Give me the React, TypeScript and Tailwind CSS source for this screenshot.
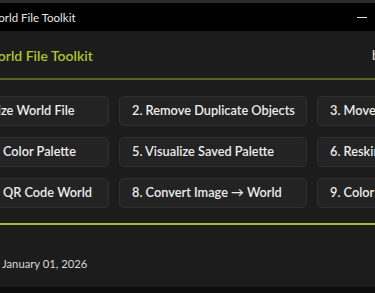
const tools = [
  "1. Standardize World File",
  "2. Remove Duplicate Objects",
  "3. Move Objects",
  "4. Generate Color Palette",
  "5. Visualize Saved Palette",
  "6. Reskin World",
  "7. Generate QR Code World",
  "8. Convert Image → World",
  "9. Color Replace",
];

export default function App() {
  return (
    <div
      className="w-[375px] h-[293px] overflow-hidden bg-[#1c1c1c] flex flex-col"
      style={{ fontFamily: 'Lato, "Noto Sans", sans-serif' }}
    >
      <div className="h-[3px] shrink-0 bg-[#2c2c2c]" />

      {/* window title bar */}
      <div className="h-[28px] shrink-0 bg-black flex items-center w-[477px]">
        <span className="ml-[-13px] pt-[2px] text-[11.5px] text-[#e6e6e6] whitespace-nowrap">
          World File Toolkit
        </span>
        <div className="ml-auto flex h-full">
          <div className="w-[46px] h-full flex items-center justify-center">
            <div className="w-[10px] h-px bg-[#e6e6e6]" />
          </div>
          <div className="w-[46px] h-full" />
          <div className="w-[46px] h-full" />
        </div>
      </div>

      {/* app header */}
      <div className="h-[47px] shrink-0 flex items-center pt-[2px]">
        <span className="w-[388px] shrink-0 ml-[-16px] text-[14px] font-semibold text-[#aec62c] whitespace-nowrap">
          World File Toolkit
        </span>
        <span className="text-[13px] text-[#e6e6e6] whitespace-nowrap">by Toolkit</span>
      </div>
      <div className="h-[2px] shrink-0 bg-[#5c6122]" />

      {/* tool buttons */}
      <div className="h-[143px] shrink-0 pt-[16px]">
        <div className="grid grid-cols-[188px_188px_188px] gap-x-[10px] gap-y-[11px] ml-[-79px] w-max">
          {tools.map((t) => (
            <button
              key={t}
              className="h-[30px] rounded-[5px] border border-[#303030] bg-[#232323] px-[12px] text-left text-[12.75px] font-semibold text-[#ececec] whitespace-nowrap overflow-hidden"
            >
              {t}
            </button>
          ))}
        </div>
      </div>
      <div className="h-[2px] shrink-0 bg-[#9dbf2a]" />

      {/* footer */}
      <div className="h-[62px] shrink-0 flex items-center pt-[16px]">
        <span className="ml-[2px] text-[11.25px] text-[#d8d8d8] whitespace-nowrap">January 01, 2026</span>
      </div>
      <div className="flex-1 bg-[#0c0c0c]" />
    </div>
  );
}
